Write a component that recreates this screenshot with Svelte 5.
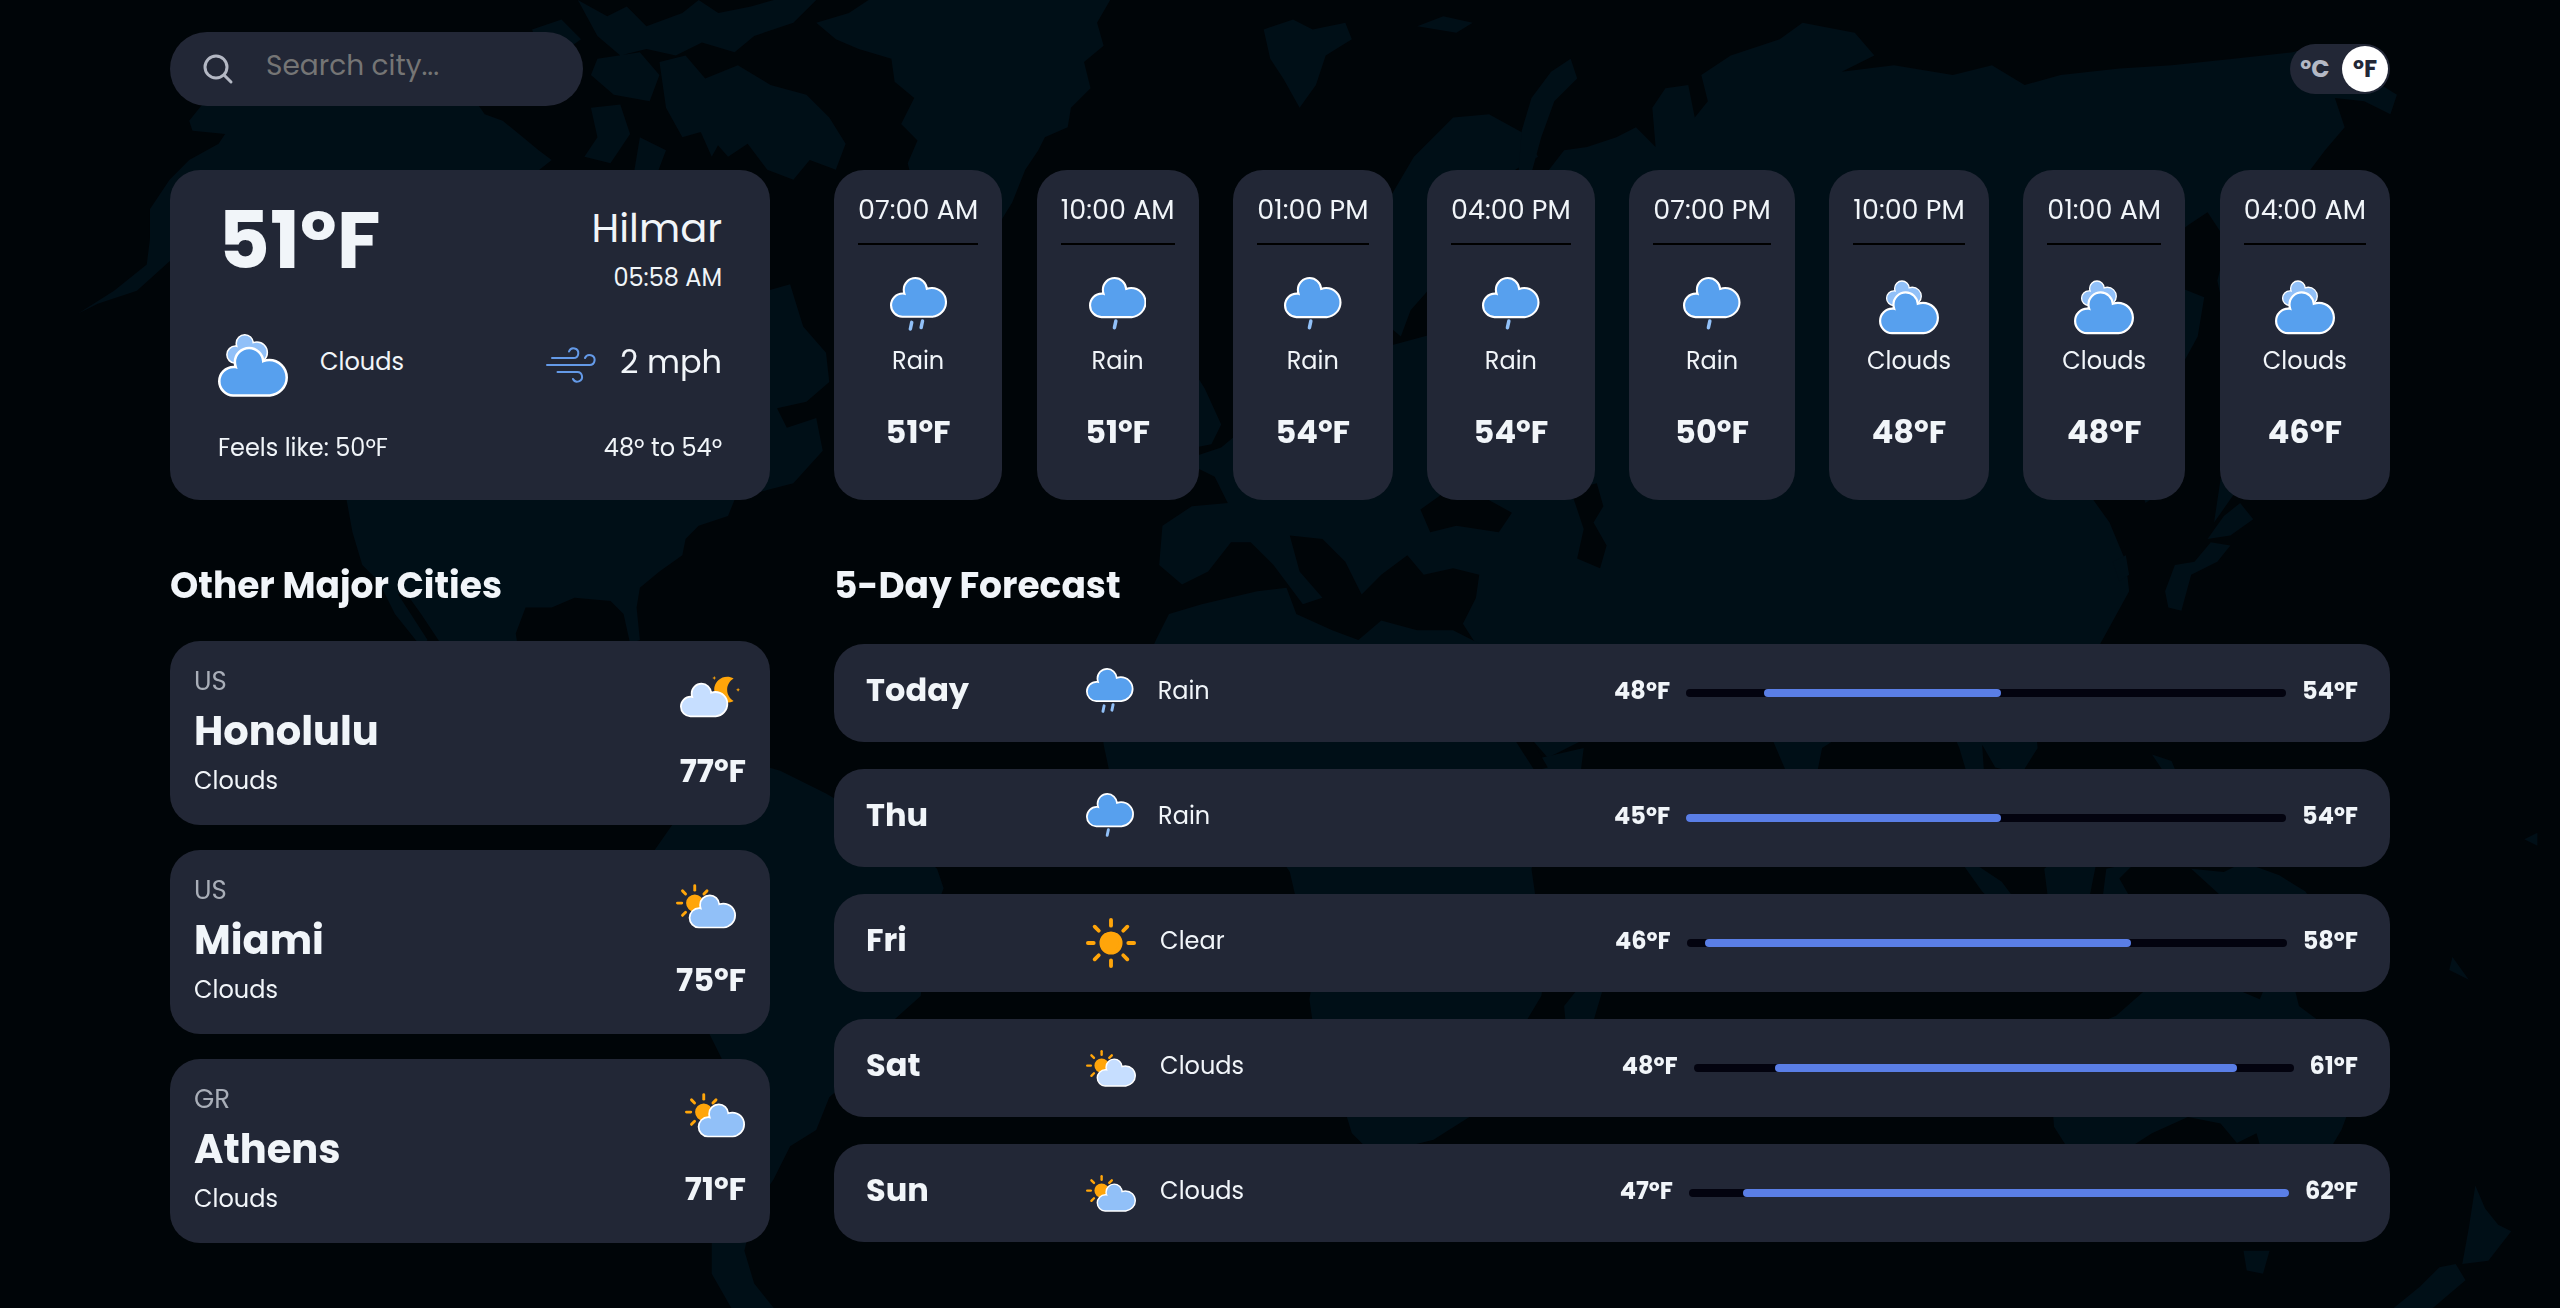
<script>
  let unit = $state('F');
  let query = $state('');

  const hours = [
    { time: '07:00 AM', icon: 'showers', label: 'Rain', temp: 51 },
    { time: '10:00 AM', icon: 'rain', label: 'Rain', temp: 51 },
    { time: '01:00 PM', icon: 'rain', label: 'Rain', temp: 54 },
    { time: '04:00 PM', icon: 'rain', label: 'Rain', temp: 54 },
    { time: '07:00 PM', icon: 'rain', label: 'Rain', temp: 50 },
    { time: '10:00 PM', icon: 'clouds', label: 'Clouds', temp: 48 },
    { time: '01:00 AM', icon: 'clouds', label: 'Clouds', temp: 48 },
    { time: '04:00 AM', icon: 'clouds', label: 'Clouds', temp: 46 }
  ];

  const cities = [
    { country: 'US', name: 'Honolulu', label: 'Clouds', icon: 'night', temp: 77 },
    { country: 'US', name: 'Miami', label: 'Clouds', icon: 'partly', temp: 75 },
    { country: 'GR', name: 'Athens', label: 'Clouds', icon: 'partly', temp: 71 }
  ];

  // start and span are percentages of the week's full temperature range
  const days = [
    { day: 'Today', icon: 'showers', label: 'Rain', min: 48, max: 54, start: 13, span: 39.5 },
    { day: 'Thu', icon: 'rain', label: 'Rain', min: 45, max: 54, start: 0, span: 52.5 },
    { day: 'Fri', icon: 'clear', label: 'Clear', min: 46, max: 58, start: 3, span: 71 },
    { day: 'Sat', icon: 'fair', label: 'Clouds', min: 48, max: 61, start: 13.5, span: 77 },
    { day: 'Sun', icon: 'partly', label: 'Clouds', min: 47, max: 62, start: 9, span: 91 }
  ];

  const viewBoxes = {
    showers: '15.5 20.9 32.8 34.5',
    rain: '15.5 20.9 32.8 34.2',
    clouds: '15.5 13.1 32.8 32.8',
    night: '15.5 10.2 40.8 40.8',
    partly: '6.7 8.1 41.6 41.6',
    fair: '6.7 8.1 41.6 41.6',
    clear: '-13 -13 26 26'
  };

  const rays = [0, 45, 90, 135, 180, 225, 270, 315];

  const toUnit = (f) => (unit === 'F' ? f : Math.round(((f - 32) * 5) / 9));
</script>

{#snippet cloud(fill, transform)}
  <path
    d="M47.7,35.4c0-4.6-3.7-8.2-8.2-8.2c-1,0-1.9,0.2-2.8,0.5c-0.3-3.4-3.1-6.2-6.6-6.2c-3.7,0-6.7,3-6.7,6.7c0,0.8,0.2,1.6,0.4,2.3c-0.3-0.1-0.7-0.1-1-0.1c-3.7,0-6.7,3-6.7,6.7c0,3.6,2.9,6.6,6.5,6.7l17.2,0C44.2,43.3,47.7,39.8,47.7,35.4z"
    {fill}
    {transform}
    stroke="#fff"
    stroke-width="1.2"
  />
{/snippet}

{#snippet sun(transform)}
  <g {transform} stroke="#ffa50a" stroke-width="2" stroke-linecap="round">
    <circle r="5" fill="#ffa50a" />
    {#each rays as angle}
      <line x1="9" x2="12" transform="rotate({angle})" />
    {/each}
  </g>
{/snippet}

{#snippet weather(name)}
  <svg class="weather" viewBox={viewBoxes[name]} aria-hidden="true">
    {#if name === 'clear'}
      {@render sun('translate(0 0)')}
    {:else if name === 'partly' || name === 'fair'}
      {@render sun('translate(19.7 26.9)')}
      {@render cloud(name === 'fair' ? '#c6deff' : '#91c0f8', null)}
    {:else if name === 'night'}
      <g fill="#ffa50a">
        <path
          transform="translate(34.8 14) scale(0.88)"
          d="M14.5,13.2c0-3.7,2-6.9,5-8.7c-1.5-0.9-3.2-1.3-5-1.3c-5.5,0-10,4.5-10,10s4.5,10,10,10c1.8,0,3.5-0.5,5-1.3C16.5,20.2,14.5,16.9,14.5,13.2z"
        />
        <path d="M38.8 16.3l0.4 1 1 0.4-1 0.4-0.4 1-0.4-1-1-0.4 1-0.4z" />
        <path d="M55 24.3l0.4 1 1 0.4-1 0.4-0.4 1-0.4-1-1-0.4 1-0.4z" />
      </g>
      {@render cloud('#c6deff', null)}
    {:else if name === 'clouds'}
      {@render cloud('#91c0f8', 'translate(10 2.4) scale(0.6)')}
      {@render cloud('#57a0ee', null)}
    {:else}
      <g stroke="#91c0f8" stroke-width="2" stroke-linecap="round">
        {#if name === 'showers'}
          <line x1="28" y1="47" x2="27.2" y2="50.8" />
          <line x1="34.2" y1="46.2" x2="33.4" y2="50" />
        {:else}
          <line x1="30.8" y1="46" x2="30" y2="49.8" />
        {/if}
      </g>
      {@render cloud('#57a0ee', null)}
    {/if}
  </svg>
{/snippet}

<svg class="map" viewBox="0 0 1568 801" preserveAspectRatio="xMidYMid slice" aria-hidden="true">
  <!-- North America -->
  <path d="M92 128L104 110 116 98 134 88 138 82 118 80 116 74 124 64 150 52 178 46 204 36 214 44 250 50 290 60 297 70 308 74 318 82 330 92 338 98 328 106 350 120 372 116 396 130 384 160 392 196 410 214 424 230 430 204 426 176 440 158 462 160 470 178 484 174 492 200 506 216 508 234 494 246 476 250 482 262 500 256 504 276 486 296 470 300 450 306 446 316 428 322 420 330 418 340 404 350 392 360 390 372 392 392 386 394 382 376 374 368 352 366 338 372 322 372 316 388 320 414 336 424 350 412 360 410 354 432 362 448 384 456 404 470 396 474 372 462 350 444 316 432 288 414 270 394 258 376 248 362 244 364 262 392 258 396 242 376 232 356 222 346 216 326 212 304 206 270 200 236 186 200 170 168 150 148 126 152 104 160 84 178 60 186 48 192 70 178 90 162 92 146z" />
  <path d="M354 0L372 10 384 4 396 16 418 8 428 0 440 8 460 4 474 0 500 0 486 14 462 22 450 32 430 26 414 34 396 30 380 34 366 22zM366 36L392 32 404 46 398 62 376 58 362 46zM404 38L420 34 432 48 452 40 472 52 494 58 508 72 518 88 512 104 496 98 486 110 470 104 458 88 446 96 432 80 418 84 408 66zM362 66L380 64 386 82 374 100 358 96 366 84zM392 84L408 92 402 108 388 108zM326 18L344 12 356 24 342 34 330 30zM428 78L440 66 446 78 436 96zM454 66L466 60 470 76 460 86z" />
  <!-- Greenland, Iceland and Svalbard -->
  <path d="M500 14L520 8 532 0 680 0 672 14 676 28 664 38 668 54 656 66 654 78 640 84 636 92 628 104 620 124 604 150 598 168 584 160 572 138 560 116 556 100 562 86 552 76 560 60 548 50 546 36 526 30 512 24zM684 146L698 138 714 144 722 152 706 162 690 158zM774 18L792 12 804 18 824 14 828 24 812 34 806 52 796 66 786 48 778 36zM868 16L884 10 902 14 892 20z" />
  <!-- South America -->
  <path d="M388 544L392 530 400 522 414 502 428 478 450 464 478 472 506 486 530 500 544 512 560 520 574 532 578 544 572 560 574 572 566 592 564 610 546 626 532 642 524 658 508 672 500 692 484 702 474 722 462 740 456 766 462 786 474 801 448 801 436 780 436 740 444 700 442 648 434 632 412 606 400 576z" />
  <!-- Europe, Asia and the Middle East -->
  <path d="M710 346L712 322 730 310 752 308 744 292 724 282 748 274 772 254 790 238 808 230 814 208 830 204 850 212 880 204 890 184 878 174 864 190 858 206 846 196 848 170 838 190 824 188 824 164 846 130 866 96 890 72 912 70 934 82 942 96 928 104 944 110 958 92 972 90 990 84 1002 78 1014 90 1012 66 1020 54 1034 52 1038 72 1046 62 1042 46 1060 34 1090 24 1104 14 1136 20 1148 34 1128 44 1160 40 1196 46 1220 40 1240 52 1262 46 1298 42 1330 40 1368 36 1404 32 1420 28 1440 34 1452 48 1468 58 1464 70 1448 62 1430 60 1436 78 1424 92 1412 108 1396 116 1384 130 1382 154 1370 178 1362 190 1358 172 1364 148 1352 130 1340 138 1322 152 1330 174 1350 182 1346 206 1334 228 1318 248 1308 262 1316 282 1320 304 1314 308 1306 286 1292 280 1286 296 1282 306 1292 320 1302 344 1304 362 1292 384 1282 402 1262 414 1248 424 1246 440 1248 458 1238 474 1222 470 1214 456 1216 486 1228 508 1222 512 1210 492 1200 458 1188 430 1168 422 1144 440 1116 458 1112 478 1098 482 1086 454 1078 432 1058 416 1030 408 1010 410 998 432 972 452 948 464 934 448 914 410 896 382 904 366 906 352 890 348 872 352 862 340 846 352 834 364 824 344 810 330 790 328 796 350 810 366 798 370 780 346 766 332 754 332 740 350 724 358z" />
  <path d="M712 254L720 234 728 222 738 238 748 260 742 272 722 276 728 262zM706 246L714 248 712 264 702 266zM930 106L932 80 938 60 950 44 962 36 966 48 952 62 944 84 938 106zM1326 362L1332 346 1344 344 1354 332 1366 334 1358 344 1342 352 1336 374 1328 372zM1352 330L1362 316 1372 308 1380 318 1366 328zM1356 320L1362 280 1364 232 1372 262 1370 300zM1294 344L1302 340 1304 352 1298 356z" />
  <!-- Africa -->
  <path d="M676 456L674 440 682 424 700 410 708 392 716 376 736 370 770 362 788 360 794 376 816 386 832 392 846 380 868 386 890 386 906 394 918 420 928 448 944 464 970 458 968 474 948 510 938 532 942 560 948 588 944 610 926 640 918 662 900 684 878 698 862 702 838 704 828 694 820 668 806 640 802 612 806 588 796 560 790 534 782 522 758 516 728 524 700 514 684 494zM960 640L958 616 974 596 980 580 984 598 974 632z" />
  <!-- Indonesia and New Guinea -->
  <path d="M1194 518L1208 528 1226 540 1238 556 1244 572 1232 564 1214 546zM1252 532L1264 522 1276 516 1284 528 1280 548 1266 558 1254 548zM1290 532L1308 528 1298 538 1306 552 1296 552 1288 548zM1342 532L1362 534 1374 528 1396 536 1412 546 1422 562 1404 556 1384 558 1364 552zM1318 462L1330 466 1338 486 1330 480zM1324 488L1340 492 1342 504 1330 500z" />
  <!-- Australia and New Zealand -->
  <path d="M1258 690L1256 664 1266 640 1282 628 1296 622 1312 608 1326 596 1346 590 1366 592 1370 606 1384 612 1394 588 1404 600 1408 616 1424 628 1436 652 1440 676 1434 692 1422 712 1404 720 1386 708 1382 694 1370 700 1360 688 1340 684 1318 694 1296 708 1272 712zM1374 766L1390 766 1386 780 1376 778zM1516 726L1522 740 1530 750 1538 754 1524 772 1508 774 1512 752zM1504 774L1510 784 1490 801 1466 801 1482 788 1494 776zM1502 586L1512 600 1500 594zM1546 514L1554 510 1554 518z" />
  <!-- Black and Caspian seas -->
  <path class="sea" d="M870 312L884 302 908 304 926 314 918 326 892 322 876 326zM962 300L978 296 982 310 976 320 984 334 980 348 966 342 970 324zM916 418L934 446 948 470 940 472 922 444 912 424zM948 408L962 412 982 428 974 430 956 420z" />
</svg>

<main class="page">
  <header class="topbar">
    <label class="search">
      <svg viewBox="0 0 32 32" aria-hidden="true">
        <circle cx="14" cy="14" r="11" />
        <path d="M22 22l7 7" />
      </svg>
      <input type="text" placeholder="Search city..." aria-label="Search city" bind:value={query} />
    </label>
    <div class="toggle">
      <button class={{ active: unit === 'C' }} onclick={() => (unit = 'C')}>ºC</button>
      <button class={{ active: unit === 'F' }} onclick={() => (unit = 'F')}>ºF</button>
    </div>
  </header>

  <div class="layout">
    <section class="card current">
      <div class="row top">
        <span class="current-temp">{toUnit(51)}º{unit}</span>
        <div class="place">
          <h1>Hilmar</h1>
          <p>05:58 AM</p>
        </div>
      </div>
      <div class="row middle">
        <div class="condition">
          {@render weather('clouds')}
          <span>Clouds</span>
        </div>
        <div class="wind">
          <svg viewBox="0 0 50 38" aria-hidden="true">
            <path d="M6 12H27.5A4.8 4.8 0 1 0 23 5.5" />
            <path d="M1 19H43.5A5 5 0 1 0 39 12" />
            <path d="M11.5 26H31A4.8 4.8 0 1 1 27 33" />
          </svg>
          <span>2 mph</span>
        </div>
      </div>
      <div class="row">
        <span>Feels like: {toUnit(50)}º{unit}</span>
        <span>{toUnit(48)}º to {toUnit(54)}º</span>
      </div>
    </section>

    <section class="hourly">
      {#each hours as hour}
        <article class="card hour">
          <p class="hour-time">{hour.time}</p>
          {@render weather(hour.icon)}
          <p>{hour.label}</p>
          <p class="temp">{toUnit(hour.temp)}º{unit}</p>
        </article>
      {/each}
    </section>

    <section>
      <h2>Other Major Cities</h2>
      <div class="cities">
        {#each cities as city}
          <article class="card city">
            <div>
              <p class="country">{city.country}</p>
              <h3>{city.name}</h3>
              <p>{city.label}</p>
            </div>
            <div class="city-weather">
              {@render weather(city.icon)}
              <p class="temp">{toUnit(city.temp)}º{unit}</p>
            </div>
          </article>
        {/each}
      </div>
    </section>

    <section class="forecast">
      <h2>5-Day Forecast</h2>
      <div class="days">
        {#each days as d}
          <article class="card day">
            <h3>{d.day}</h3>
            <div class="day-condition">
              {@render weather(d.icon)}
              <span>{d.label}</span>
            </div>
            <div class="range">
              <span>{toUnit(d.min)}º{unit}</span>
              <div class="track">
                <div class="fill" style="margin-left: {d.start}%; width: {d.span}%"></div>
              </div>
              <span>{toUnit(d.max)}º{unit}</span>
            </div>
          </article>
        {/each}
      </div>
    </section>
  </div>
</main>

<style>
  :global(body) {
    margin: 0;
    background: #000508;
    color: #f1f5f9;
    font-family: Poppins, Inter, sans-serif;
    font-size: 24px;
    line-height: 36px;
  }

  h1,
  h2,
  h3,
  p {
    margin: 0;
  }

  .map {
    position: fixed;
    inset: 0;
    width: 100%;
    height: 100%;
    fill: #000f17;
    z-index: -1;
  }

  .sea {
    fill: #000508;
  }

  .page {
    padding: 32px 170px;
  }

  .topbar {
    display: flex;
    justify-content: space-between;
    align-items: center;
    margin-bottom: 64px;
  }

  .search {
    display: flex;
    align-items: center;
    gap: 32px;
    box-sizing: border-box;
    width: 413px;
    height: 74px;
    padding: 0 32px;
    border-radius: 37px;
    background: #222736;
  }

  .search svg {
    width: 32px;
    height: 32px;
    flex: none;
    fill: none;
    stroke: #b4b8c4;
    stroke-width: 3;
    stroke-linecap: round;
  }

  .search input {
    min-width: 0;
    flex: 1;
    padding: 0 0 6px;
    border: 0;
    outline: 0;
    background: none;
    color: inherit;
    font: inherit;
    font-size: 28px;
  }

  .search input::placeholder {
    color: #757575;
    opacity: 1;
  }

  .toggle {
    display: flex;
    gap: 4px;
    padding: 2px;
    border-radius: 25px;
    background: #222736;
  }

  .toggle button {
    width: 46px;
    height: 46px;
    padding: 0;
    border: 0;
    border-radius: 50%;
    background: none;
    color: #b4b8c4;
    font: inherit;
    font-weight: 700;
    cursor: pointer;
  }

  .toggle .active {
    background: #fff;
    color: #222736;
  }

  .layout {
    display: grid;
    grid-template-columns: 27fr 70fr;
    column-gap: 64px;
    row-gap: 60px;
  }

  .card {
    border-radius: 30px;
    background: #222736;
  }

  .weather {
    display: block;
    width: auto;
    height: 60px;
  }

  .temp {
    font-size: 32px;
    line-height: 48px;
    font-weight: 700;
  }

  .current {
    padding: 26px 48px 34px;
  }

  .row {
    display: flex;
    justify-content: space-between;
    align-items: center;
  }

  .row.top {
    align-items: flex-start;
  }

  .row.middle {
    margin: 34px 0 30px;
  }

  .row.middle span {
    padding-bottom: 6px;
  }

  .current-temp {
    font-size: 80px;
    line-height: 88px;
    font-weight: 700;
  }

  .place {
    text-align: right;
  }

  .place h1 {
    font-size: 40px;
    line-height: 64px;
    font-weight: 400;
  }

  .condition {
    display: flex;
    align-items: center;
    gap: 32px;
  }

  .condition .weather {
    height: 70px;
  }

  .wind {
    display: flex;
    align-items: center;
    gap: 24px;
    font-size: 32px;
  }

  .wind svg {
    width: 50px;
    height: 38px;
    fill: none;
    stroke: #649ae8;
    stroke-width: 2;
    stroke-linecap: round;
  }

  .hourly {
    display: flex;
    justify-content: space-between;
  }

  .hour {
    display: flex;
    flex-direction: column;
    align-items: center;
    padding: 20px 24px;
  }

  .hour-time {
    align-self: stretch;
    padding-bottom: 13px;
    border-bottom: 2px solid #000;
    font-size: 27px;
    line-height: 40px;
    text-align: center;
    white-space: nowrap;
  }

  .hour .weather {
    margin: 32px 0 6px;
  }

  .hour .temp {
    margin-top: 29px;
  }

  h2 {
    margin-bottom: 29px;
    font-size: 36px;
    line-height: 52px;
    font-weight: 700;
  }

  .cities {
    display: flex;
    flex-direction: column;
    gap: 25px;
  }

  .city {
    display: flex;
    justify-content: space-between;
    padding: 22px 24px 26px;
  }

  .country {
    color: #a9aeb8;
    font-size: 26px;
  }

  .city h3 {
    margin: 4px 0;
    font-size: 40px;
    line-height: 56px;
    font-weight: 700;
  }

  .city-weather {
    padding-top: 4px;
  }

  .city-weather .temp {
    margin-top: 20px;
  }

  .forecast h2 {
    margin-bottom: 32px;
  }

  .days {
    display: flex;
    flex-direction: column;
    gap: 27px;
  }

  .day {
    display: flex;
    align-items: center;
    padding: 24px 32px;
  }

  .day h3 {
    width: 220px;
    padding-bottom: 6px;
    font-size: 32px;
    font-weight: 700;
  }

  .day-condition {
    display: flex;
    align-items: center;
    gap: 24px;
  }

  .day-condition .weather {
    height: 50px;
  }

  .day-condition span,
  .range span {
    padding-bottom: 4px;
  }

  .range {
    display: flex;
    align-items: center;
    gap: 16px;
    margin-left: auto;
    font-weight: 700;
  }

  .track {
    width: 600px;
    height: 8px;
    border-radius: 4px;
    background: #03030f;
  }

  .fill {
    height: 100%;
    border-radius: 4px;
    background: #5a7ee6;
  }
</style>
